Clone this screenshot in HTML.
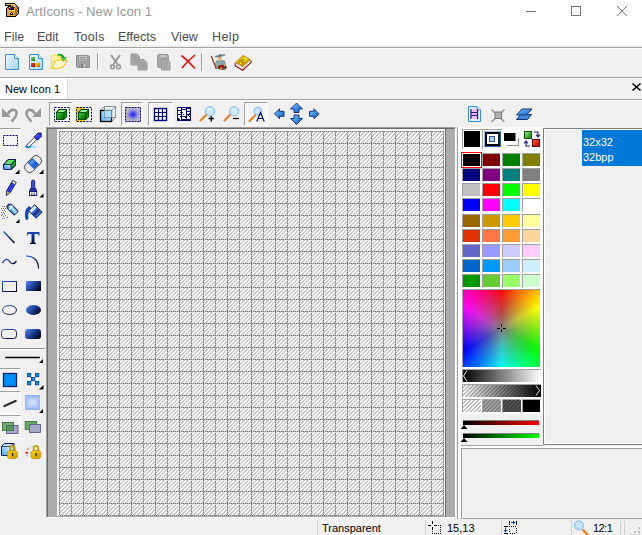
<!DOCTYPE html>
<html><head><meta charset="utf-8">
<style>
*{margin:0;padding:0;box-sizing:border-box}
html,body{width:642px;height:535px;overflow:hidden;background:#f0f0f0;font-family:"Liberation Sans",sans-serif;position:relative}
.a{position:absolute}
.t{position:absolute;white-space:nowrap;line-height:1}
svg{position:absolute;overflow:visible}
.hl{position:absolute;left:0;width:642px;height:1px}
.press{position:absolute;border-top:1px solid #a0a0a0;border-left:1px solid #a0a0a0;border-right:1px solid #fff;border-bottom:1px solid #fff;
 background-color:#fafafa;background-image:linear-gradient(45deg,#f0f0f0 25%,transparent 25%,transparent 75%,#f0f0f0 75%),linear-gradient(45deg,#f0f0f0 25%,transparent 25%,transparent 75%,#f0f0f0 75%);background-size:2px 2px;background-position:0 0,1px 1px}
.sw{position:absolute;width:19px;height:14px;border-top:1px solid #a0a0a0;border-left:1px solid #a0a0a0;border-right:1px solid #fff;border-bottom:1px solid #fff}
</style></head><body>
<!-- title + menu white -->
<div class="a" style="left:0;top:0;width:642px;height:45px;background:#fff"></div>
<div class="hl" style="top:47px;background:#a0a0a0"></div>
<div class="hl" style="top:48px;background:#fff"></div>
<div class="hl" style="top:77px;background:#a0a0a0"></div>
<div class="hl" style="top:78px;background:#fff"></div>
<div class="hl" style="top:99px;background:#a0a0a0"></div>
<div class="hl" style="top:100px;background:#fff"></div>

<!-- title -->
<div class="t" style="left:26px;top:5px;font-size:13.2px;color:#999">ArtIcons - New Icon 1</div>
<!-- window controls -->
<div class="a" style="left:526px;top:11px;width:10px;height:1px;background:#777"></div>
<div class="a" style="left:571px;top:6px;width:10px;height:10px;border:1px solid #777"></div>
<svg style="left:617px;top:6px" width="10" height="10"><path d="M0 0L10 10M10 0L0 10" stroke="#777" stroke-width="1"/></svg>

<!-- menu -->
<div class="t" style="left:4px;top:30.5px;font-size:12.5px;color:#4a4a4a">File</div>
<div class="t" style="left:37px;top:30.5px;font-size:12.5px;color:#4a4a4a">Edit</div>
<div class="t" style="left:74px;top:30.5px;font-size:12.5px;color:#4a4a4a;letter-spacing:0.3px">Tools</div>
<div class="t" style="left:118px;top:30.5px;font-size:12.5px;color:#4a4a4a">Effects</div>
<div class="t" style="left:171px;top:30.5px;font-size:12.5px;color:#4a4a4a">View</div>
<div class="t" style="left:212px;top:30.5px;font-size:12.5px;color:#4a4a4a;letter-spacing:0.4px">Help</div>

<!-- tab -->
<div class="a" style="left:0;top:79px;width:68px;height:20px;background:#fff;border-right:1px solid #d9d9d9"></div>
<div class="t" style="left:5px;top:84px;font-size:11px;color:#000">New Icon 1</div>
<svg style="left:632px;top:83px" width="9" height="8"><path d="M0.5 0.5L8.5 7.5M8.5 0.5L0.5 7.5" stroke="#000" stroke-width="1.6"/></svg>


<!-- pressed buttons toolbar2 -->
<div class="press" style="left:49px;top:102px;width:24px;height:24px"></div>
<div class="press" style="left:121px;top:102px;width:22px;height:24px"></div>
<div class="press" style="left:148px;top:102px;width:25px;height:24px"></div>
<div class="press" style="left:244px;top:102px;width:24px;height:24px"></div>
<!-- pressed buttons left palette -->
<div class="press" style="left:-1px;top:128px;width:22px;height:24px"></div>
<div class="press" style="left:-1px;top:368px;width:22px;height:23px"></div>
<div class="press" style="left:-1px;top:391px;width:22px;height:24px"></div>
<div class="press" style="left:-1px;top:415px;width:22px;height:24px"></div>

<!-- CANVAS FRAME -->
<div class="a" style="left:46px;top:127px;width:410px;height:391px;border-top:1px solid #a0a0a0;border-left:1px solid #a0a0a0;border-right:1px solid #fff;border-bottom:1px solid #fff"></div>
<div class="a" style="left:47px;top:128px;width:408px;height:389px;border-top:1px solid #696969;border-left:1px solid #696969;border-right:1px solid #ababab;border-bottom:1px solid #ababab;background:#ababab"></div>
<div class="a" style="left:57px;top:129px;width:388px;height:387px;background:#fff"></div>
<div class="a" style="left:445px;top:129px;width:1px;height:388px;background:#6a6a6a"></div>
<svg style="left:59px;top:131px" width="385" height="385" shape-rendering="crispEdges">
<defs>
<pattern id="hatch" width="4" height="4" patternUnits="userSpaceOnUse"><g fill="#c8c8c8"><rect x="0" y="1" width="1" height="1"/><rect x="0" y="2" width="1" height="1"/><rect x="1" y="0" width="1" height="1"/><rect x="1" y="1" width="1" height="1"/><rect x="2" y="0" width="1" height="1"/><rect x="2" y="3" width="1" height="1"/><rect x="3" y="2" width="1" height="1"/><rect x="3" y="3" width="1" height="1"/></g></pattern>
<pattern id="hatch2" width="4" height="4" patternUnits="userSpaceOnUse"><g fill="#c0c0c0"><rect x="0" y="1" width="1" height="1"/><rect x="0" y="2" width="1" height="1"/><rect x="1" y="0" width="1" height="1"/><rect x="1" y="1" width="1" height="1"/><rect x="2" y="0" width="1" height="1"/><rect x="2" y="3" width="1" height="1"/><rect x="3" y="2" width="1" height="1"/><rect x="3" y="3" width="1" height="1"/></g></pattern>
<pattern id="hA" width="2" height="2" patternUnits="userSpaceOnUse"><rect x="0" y="0" width="1" height="2" fill="#727272"/></pattern>
<pattern id="hB" width="2" height="2" patternUnits="userSpaceOnUse"><rect x="1" y="0" width="1" height="2" fill="#727272"/></pattern>
<pattern id="vA" width="2" height="2" patternUnits="userSpaceOnUse"><rect x="0" y="0" width="2" height="1" fill="#727272"/></pattern>
<pattern id="vB" width="2" height="2" patternUnits="userSpaceOnUse"><rect x="0" y="1" width="2" height="1" fill="#727272"/></pattern>
</defs>
<rect width="385" height="385" fill="url(#hatch)"/>
<g fill="#c4c4c4"><rect x="0" y="0" width="385" height="1"/><rect x="0" y="12" width="385" height="1"/><rect x="0" y="24" width="385" height="1"/><rect x="0" y="36" width="385" height="1"/><rect x="0" y="48" width="385" height="1"/><rect x="0" y="60" width="385" height="1"/><rect x="0" y="72" width="385" height="1"/><rect x="0" y="84" width="385" height="1"/><rect x="0" y="96" width="385" height="1"/><rect x="0" y="108" width="385" height="1"/><rect x="0" y="120" width="385" height="1"/><rect x="0" y="132" width="385" height="1"/><rect x="0" y="144" width="385" height="1"/><rect x="0" y="156" width="385" height="1"/><rect x="0" y="168" width="385" height="1"/><rect x="0" y="180" width="385" height="1"/><rect x="0" y="192" width="385" height="1"/><rect x="0" y="204" width="385" height="1"/><rect x="0" y="216" width="385" height="1"/><rect x="0" y="228" width="385" height="1"/><rect x="0" y="240" width="385" height="1"/><rect x="0" y="252" width="385" height="1"/><rect x="0" y="264" width="385" height="1"/><rect x="0" y="276" width="385" height="1"/><rect x="0" y="288" width="385" height="1"/><rect x="0" y="300" width="385" height="1"/><rect x="0" y="312" width="385" height="1"/><rect x="0" y="324" width="385" height="1"/><rect x="0" y="336" width="385" height="1"/><rect x="0" y="348" width="385" height="1"/><rect x="0" y="360" width="385" height="1"/><rect x="0" y="372" width="385" height="1"/><rect x="0" y="384" width="385" height="1"/><rect x="0" y="0" width="1" height="385"/><rect x="12" y="0" width="1" height="385"/><rect x="24" y="0" width="1" height="385"/><rect x="36" y="0" width="1" height="385"/><rect x="48" y="0" width="1" height="385"/><rect x="60" y="0" width="1" height="385"/><rect x="72" y="0" width="1" height="385"/><rect x="84" y="0" width="1" height="385"/><rect x="96" y="0" width="1" height="385"/><rect x="108" y="0" width="1" height="385"/><rect x="120" y="0" width="1" height="385"/><rect x="132" y="0" width="1" height="385"/><rect x="144" y="0" width="1" height="385"/><rect x="156" y="0" width="1" height="385"/><rect x="168" y="0" width="1" height="385"/><rect x="180" y="0" width="1" height="385"/><rect x="192" y="0" width="1" height="385"/><rect x="204" y="0" width="1" height="385"/><rect x="216" y="0" width="1" height="385"/><rect x="228" y="0" width="1" height="385"/><rect x="240" y="0" width="1" height="385"/><rect x="252" y="0" width="1" height="385"/><rect x="264" y="0" width="1" height="385"/><rect x="276" y="0" width="1" height="385"/><rect x="288" y="0" width="1" height="385"/><rect x="300" y="0" width="1" height="385"/><rect x="312" y="0" width="1" height="385"/><rect x="324" y="0" width="1" height="385"/><rect x="336" y="0" width="1" height="385"/><rect x="348" y="0" width="1" height="385"/><rect x="360" y="0" width="1" height="385"/><rect x="372" y="0" width="1" height="385"/><rect x="384" y="0" width="1" height="385"/></g>
<rect x="0" y="0" width="385" height="1" fill="url(#hB)"/><rect x="0" y="12" width="385" height="1" fill="url(#hA)"/><rect x="0" y="24" width="385" height="1" fill="url(#hB)"/><rect x="0" y="36" width="385" height="1" fill="url(#hA)"/><rect x="0" y="48" width="385" height="1" fill="url(#hB)"/><rect x="0" y="60" width="385" height="1" fill="url(#hA)"/><rect x="0" y="72" width="385" height="1" fill="url(#hB)"/><rect x="0" y="84" width="385" height="1" fill="url(#hA)"/><rect x="0" y="96" width="385" height="1" fill="url(#hB)"/><rect x="0" y="108" width="385" height="1" fill="url(#hA)"/><rect x="0" y="120" width="385" height="1" fill="url(#hB)"/><rect x="0" y="132" width="385" height="1" fill="url(#hA)"/><rect x="0" y="144" width="385" height="1" fill="url(#hB)"/><rect x="0" y="156" width="385" height="1" fill="url(#hA)"/><rect x="0" y="168" width="385" height="1" fill="url(#hB)"/><rect x="0" y="180" width="385" height="1" fill="url(#hA)"/><rect x="0" y="192" width="385" height="1" fill="url(#hB)"/><rect x="0" y="204" width="385" height="1" fill="url(#hA)"/><rect x="0" y="216" width="385" height="1" fill="url(#hB)"/><rect x="0" y="228" width="385" height="1" fill="url(#hA)"/><rect x="0" y="240" width="385" height="1" fill="url(#hB)"/><rect x="0" y="252" width="385" height="1" fill="url(#hA)"/><rect x="0" y="264" width="385" height="1" fill="url(#hB)"/><rect x="0" y="276" width="385" height="1" fill="url(#hA)"/><rect x="0" y="288" width="385" height="1" fill="url(#hB)"/><rect x="0" y="300" width="385" height="1" fill="url(#hA)"/><rect x="0" y="312" width="385" height="1" fill="url(#hB)"/><rect x="0" y="324" width="385" height="1" fill="url(#hA)"/><rect x="0" y="336" width="385" height="1" fill="url(#hB)"/><rect x="0" y="348" width="385" height="1" fill="url(#hA)"/><rect x="0" y="360" width="385" height="1" fill="url(#hB)"/><rect x="0" y="372" width="385" height="1" fill="url(#hA)"/><rect x="0" y="384" width="385" height="1" fill="url(#hB)"/>
<rect x="0" y="0" width="1" height="385" fill="url(#vB)"/><rect x="12" y="0" width="1" height="385" fill="url(#vA)"/><rect x="24" y="0" width="1" height="385" fill="url(#vB)"/><rect x="36" y="0" width="1" height="385" fill="url(#vA)"/><rect x="48" y="0" width="1" height="385" fill="url(#vB)"/><rect x="60" y="0" width="1" height="385" fill="url(#vA)"/><rect x="72" y="0" width="1" height="385" fill="url(#vB)"/><rect x="84" y="0" width="1" height="385" fill="url(#vA)"/><rect x="96" y="0" width="1" height="385" fill="url(#vB)"/><rect x="108" y="0" width="1" height="385" fill="url(#vA)"/><rect x="120" y="0" width="1" height="385" fill="url(#vB)"/><rect x="132" y="0" width="1" height="385" fill="url(#vA)"/><rect x="144" y="0" width="1" height="385" fill="url(#vB)"/><rect x="156" y="0" width="1" height="385" fill="url(#vA)"/><rect x="168" y="0" width="1" height="385" fill="url(#vB)"/><rect x="180" y="0" width="1" height="385" fill="url(#vA)"/><rect x="192" y="0" width="1" height="385" fill="url(#vB)"/><rect x="204" y="0" width="1" height="385" fill="url(#vA)"/><rect x="216" y="0" width="1" height="385" fill="url(#vB)"/><rect x="228" y="0" width="1" height="385" fill="url(#vA)"/><rect x="240" y="0" width="1" height="385" fill="url(#vB)"/><rect x="252" y="0" width="1" height="385" fill="url(#vA)"/><rect x="264" y="0" width="1" height="385" fill="url(#vB)"/><rect x="276" y="0" width="1" height="385" fill="url(#vA)"/><rect x="288" y="0" width="1" height="385" fill="url(#vB)"/><rect x="300" y="0" width="1" height="385" fill="url(#vA)"/><rect x="312" y="0" width="1" height="385" fill="url(#vB)"/><rect x="324" y="0" width="1" height="385" fill="url(#vA)"/><rect x="336" y="0" width="1" height="385" fill="url(#vB)"/><rect x="348" y="0" width="1" height="385" fill="url(#vA)"/><rect x="360" y="0" width="1" height="385" fill="url(#vB)"/><rect x="372" y="0" width="1" height="385" fill="url(#vA)"/><rect x="384" y="0" width="1" height="385" fill="url(#vB)"/>
</svg>

<!-- right palette panel -->
<div class="a" style="left:457px;top:127px;width:1px;height:392px;background:#a0a0a0"></div>
<div class="a" style="left:458px;top:127px;width:85px;height:287px;background:#fff"></div>
<div class="a" style="left:458px;top:414px;width:3px;height:104px;background:#fff"></div>
<div class="a" style="left:461px;top:445px;width:82px;height:1px;background:#a0a0a0"></div>
<!-- palette -->
<div class="sw" style="left:462px;top:153px;background:#000000"></div>
<div class="sw" style="left:482px;top:153px;background:#800000"></div>
<div class="sw" style="left:502px;top:153px;background:#008000"></div>
<div class="sw" style="left:522px;top:153px;background:#808000"></div>
<div class="sw" style="left:462px;top:168px;background:#000080"></div>
<div class="sw" style="left:482px;top:168px;background:#800080"></div>
<div class="sw" style="left:502px;top:168px;background:#008080"></div>
<div class="sw" style="left:522px;top:168px;background:#808080"></div>
<div class="sw" style="left:462px;top:183px;background:#c0c0c0"></div>
<div class="sw" style="left:482px;top:183px;background:#ff0000"></div>
<div class="sw" style="left:502px;top:183px;background:#00ff00"></div>
<div class="sw" style="left:522px;top:183px;background:#ffff00"></div>
<div class="sw" style="left:462px;top:198px;background:#0000ff"></div>
<div class="sw" style="left:482px;top:198px;background:#ff00ff"></div>
<div class="sw" style="left:502px;top:198px;background:#00ffff"></div>
<div class="sw" style="left:522px;top:198px;background:#ffffff"></div>
<div class="sw" style="left:462px;top:214px;background:#996600"></div>
<div class="sw" style="left:482px;top:214px;background:#cc9900"></div>
<div class="sw" style="left:502px;top:214px;background:#ffcc00"></div>
<div class="sw" style="left:522px;top:214px;background:#ffff99"></div>
<div class="sw" style="left:462px;top:229px;background:#dd3300"></div>
<div class="sw" style="left:482px;top:229px;background:#ff7744"></div>
<div class="sw" style="left:502px;top:229px;background:#ff9933"></div>
<div class="sw" style="left:522px;top:229px;background:#ffd699"></div>
<div class="sw" style="left:462px;top:244px;background:#6666cc"></div>
<div class="sw" style="left:482px;top:244px;background:#9999ff"></div>
<div class="sw" style="left:502px;top:244px;background:#ccccff"></div>
<div class="sw" style="left:522px;top:244px;background:#ffccff"></div>
<div class="sw" style="left:462px;top:259px;background:#0066cc"></div>
<div class="sw" style="left:482px;top:259px;background:#0099ff"></div>
<div class="sw" style="left:502px;top:259px;background:#99ccff"></div>
<div class="sw" style="left:522px;top:259px;background:#cceeff"></div>
<div class="sw" style="left:462px;top:274px;background:#009900"></div>
<div class="sw" style="left:482px;top:274px;background:#66cc33"></div>
<div class="sw" style="left:502px;top:274px;background:#99ff66"></div>
<div class="sw" style="left:522px;top:274px;background:#ccffcc"></div>

<div class="a" style="left:461px;top:152px;width:21px;height:16px;border:1px solid #f00"></div>
<div class="a" style="left:462px;top:153px;width:19px;height:14px;border:1px solid #fff;background:#000"></div>
<!-- header -->
<div class="a" style="left:462px;top:129px;width:40px;height:1px;background:#a0a0a0"></div>
<div class="a" style="left:462px;top:129px;width:1px;height:20px;background:#a0a0a0"></div>
<div class="a" style="left:482px;top:129px;width:1px;height:20px;background:#a0a0a0"></div>
<div class="a" style="left:464px;top:131px;width:16px;height:16px;background:#000"></div>
<div class="a" style="left:484px;top:131px;width:17px;height:16px;border:1px solid #2860c0;border-top-color:#90c0f0;border-left-color:#90c0f0"></div>
<div class="a" style="left:485px;top:132px;width:15px;height:14px;border:2px solid #000;border-right-color:#202020;background:#fff"></div>
<div class="a" style="left:489px;top:136px;width:6px;height:6px;background:#a8d0ff;border:1px solid #3050a0"></div>
<div class="a" style="left:507px;top:138px;width:12px;height:8px;background:#fff;border-right:1px solid #909090;border-bottom:1px solid #909090"></div>
<div class="a" style="left:504px;top:133px;width:12px;height:8px;background:#000;border-right:1px solid #808080"></div>
<div class="a" style="left:524px;top:131px;width:8px;height:8px;background:linear-gradient(135deg,#90f070,#108010);border:1px solid #105010"></div>
<div class="a" style="left:532px;top:139px;width:8px;height:8px;background:linear-gradient(135deg,#ff6020,#c00000);border:1px solid #600000"></div>
<!-- color wheel -->
<div class="a" style="left:462px;top:289px;width:79px;height:79px;border-top:1px solid #a0a0a0;border-left:1px solid #a0a0a0;border-right:1px solid #fff;border-bottom:1px solid #fff"></div>
<div class="a" style="left:463px;top:290px;width:77px;height:77px;background:conic-gradient(from 0deg,#f00,#ff0 60deg,#0f0 120deg,#0ff 180deg,#00f 240deg,#f0f 300deg,#f00 360deg)"></div>
<div class="a" style="left:463px;top:290px;width:77px;height:77px;background:radial-gradient(circle at 50% 50%,rgba(128,128,128,1) 0,rgba(128,128,128,.5) 17px,rgba(128,128,128,0) 42px)"></div>
<!-- gray gradient -->
<div class="a" style="left:462px;top:369px;width:79px;height:14px;border-top:1px solid #a0a0a0;border-left:1px solid #a0a0a0;border-bottom:1px solid #fff;background:linear-gradient(90deg,#000,#fff)"></div>
<!-- transparency bar -->
<div class="a" style="left:462px;top:384px;width:79px;height:14px;border-top:1px solid #a0a0a0;border-left:1px solid #a0a0a0;border-bottom:1px solid #fff"></div>
<div class="a" style="left:462px;top:399px;width:19px;height:14px;border-top:1px solid #a0a0a0;border-left:1px solid #a0a0a0;border-right:1px solid #fff;border-bottom:1px solid #fff"></div>
<div class="a" style="left:482px;top:399px;width:19px;height:14px;border-top:1px solid #a0a0a0;border-left:1px solid #a0a0a0;border-right:1px solid #fff;border-bottom:1px solid #fff"></div>
<div class="a" style="left:502px;top:399px;width:19px;height:14px;border-top:1px solid #a0a0a0;border-left:1px solid #a0a0a0;border-right:1px solid #fff;border-bottom:1px solid #fff"></div>
<div class="a" style="left:522px;top:399px;width:19px;height:14px;border-top:1px solid #a0a0a0;border-left:1px solid #a0a0a0;border-right:1px solid #fff;border-bottom:1px solid #fff;background:#000"></div>
<svg style="left:463px;top:385px" width="78" height="27" shape-rendering="crispEdges">
<defs><linearGradient id="tg" x1="0" x2="1"><stop offset="0" stop-color="#000" stop-opacity="0"/><stop offset="1" stop-color="#000" stop-opacity="1"/></linearGradient></defs>
<rect x="0" y="0" width="78" height="12" fill="#fff"/>
<rect x="0" y="0" width="78" height="12" fill="url(#hatch2)"/>
<rect x="0" y="0" width="78" height="12" fill="url(#tg)"/>
<rect x="0" y="15" width="18" height="12" fill="#fff"/><rect x="0" y="15" width="18" height="12" fill="url(#hatch2)"/>
<rect x="20" y="15" width="18" height="12" fill="#fff"/><rect x="20" y="15" width="18" height="12" fill="url(#hatch2)"/><rect x="20" y="15" width="18" height="12" fill="#000" fill-opacity="0.35"/>
<rect x="40" y="15" width="18" height="12" fill="#fff"/><rect x="40" y="15" width="18" height="12" fill="url(#hatch2)"/><rect x="40" y="15" width="18" height="12" fill="#000" fill-opacity="0.68"/>
</svg>
<!-- sliders -->
<div class="a" style="left:463px;top:420px;width:76px;height:5px;border-top:1px solid #808080;background:linear-gradient(90deg,#000,#f00)"></div>
<div class="a" style="left:463px;top:433px;width:76px;height:5px;border-top:1px solid #808080;background:linear-gradient(90deg,#000,#0f0)"></div>
<!-- list panel -->
<div class="a" style="left:543px;top:128px;width:99px;height:317px;border-left:1px solid #7c8088;border-top:1px solid #7c8088;border-bottom:1px solid #7c8088"></div>
<div class="a" style="left:544px;top:129px;width:98px;height:315px;border-left:1px solid #fff;border-top:1px solid #fff;border-bottom:1px solid #fff"></div>
<div class="a" style="left:582px;top:130px;width:60px;height:36px;background:#0078d7"></div>
<div class="t" style="left:583px;top:135px;font-size:11px;color:#fff;line-height:15px">32x32<br>32bpp</div>
<!-- bottom panel -->
<div class="a" style="left:461px;top:446px;width:181px;height:2px;background:#fff"></div>
<div class="a" style="left:461px;top:448px;width:181px;height:71px;border-left:1px solid #a0a0a0;border-top:1px solid #a0a0a0;border-bottom:1px solid #a0a0a0"></div>

<!-- status bar -->
<div class="a" style="left:317px;top:520px;width:1px;height:15px;background:#d0d0d0"></div>
<div class="a" style="left:425px;top:520px;width:1px;height:15px;background:#d0d0d0"></div>
<div class="a" style="left:501px;top:520px;width:1px;height:15px;background:#d0d0d0"></div>
<div class="a" style="left:571px;top:520px;width:1px;height:15px;background:#d0d0d0"></div>
<div class="a" style="left:620px;top:521px;width:1px;height:14px;background:#d0d0d0"></div><div class="a" style="left:624px;top:521px;width:1px;height:14px;background:#d0d0d0"></div>
<div class="t" style="left:322px;top:523px;font-size:11px;color:#000">Transparent</div>
<div class="t" style="left:447px;top:523px;font-size:11px;color:#000">15,13</div>
<div class="t" style="left:593px;top:523px;font-size:11px;color:#000;letter-spacing:-0.5px">12:1</div>


<svg style="left:0;top:0" width="642" height="535">
<defs>
<linearGradient id="docg" x1="0" y1="0" x2="1" y2="1"><stop offset="0" stop-color="#eaf8ff"/><stop offset="1" stop-color="#a9d4f5"/></linearGradient>
<linearGradient id="grn" x1="0" y1="0" x2="1" y2="1"><stop offset="0" stop-color="#8fe070"/><stop offset="1" stop-color="#087008"/></linearGradient>
<linearGradient id="red" x1="0" y1="0" x2="1" y2="1"><stop offset="0" stop-color="#ff5030"/><stop offset="1" stop-color="#b00000"/></linearGradient>
<linearGradient id="org" x1="0" y1="0" x2="1" y2="1"><stop offset="0" stop-color="#ffd000"/><stop offset="1" stop-color="#b07000"/></linearGradient>
<linearGradient id="fold" x1="0" y1="0" x2="1" y2="1"><stop offset="0" stop-color="#fffde0"/><stop offset="1" stop-color="#f8e870"/></linearGradient>
<linearGradient id="blu" x1="0" y1="0" x2="1" y2="1"><stop offset="0" stop-color="#80c8ff"/><stop offset="1" stop-color="#0060d0"/></linearGradient>
<linearGradient id="blk" x1="0" y1="0.2" x2="1" y2="0.8"><stop offset="0" stop-color="#5080e8"/><stop offset="0.5" stop-color="#1a3a90"/><stop offset="1" stop-color="#000010"/></linearGradient>
<linearGradient id="cube" x1="0" y1="0" x2="1" y2="1"><stop offset="0" stop-color="#30d030"/><stop offset="1" stop-color="#006000"/></linearGradient>
<radialGradient id="rw"><stop offset="0" stop-color="#e0f0ff"/><stop offset="1" stop-color="#e0f0ff" stop-opacity="0"/></radialGradient>
<linearGradient id="ltb" x1="0" y1="1" x2="1" y2="0"><stop offset="0" stop-color="#3088f8"/><stop offset="1" stop-color="#d8f8ff"/></linearGradient>
<linearGradient id="ltb2" x1="0" y1="0" x2="1" y2="0"><stop offset="0" stop-color="#1060d0"/><stop offset="0.6" stop-color="#c8f0ff"/><stop offset="1" stop-color="#3080e0"/></linearGradient>
<linearGradient id="tgrad" x1="0" y1="0" x2="0" y2="1"><stop offset="0" stop-color="#1848c0"/><stop offset="1" stop-color="#000830"/></linearGradient>
<linearGradient id="lgrad" gradientUnits="userSpaceOnUse" x1="3" y1="231" x2="15" y2="243"><stop offset="0" stop-color="#3070f0"/><stop offset="1" stop-color="#000"/></linearGradient>
<linearGradient id="glass" x1="0" y1="1" x2="1" y2="0"><stop offset="0" stop-color="#40a8f8"/><stop offset="1" stop-color="#d0f4ff"/></linearGradient>
<linearGradient id="pyT" x1="0" y1="0" x2="0" y2="1"><stop offset="0" stop-color="#8aaaff"/><stop offset="1" stop-color="#e8f0ff"/></linearGradient>
<linearGradient id="pyB" x1="0" y1="1" x2="0" y2="0"><stop offset="0" stop-color="#8aaaff"/><stop offset="1" stop-color="#e8f0ff"/></linearGradient>
<linearGradient id="pyL" x1="0" y1="0" x2="1" y2="0"><stop offset="0" stop-color="#94b4ff"/><stop offset="1" stop-color="#e8f0ff"/></linearGradient>
<linearGradient id="pyR" x1="1" y1="0" x2="0" y2="0"><stop offset="0" stop-color="#94b4ff"/><stop offset="1" stop-color="#e8f0ff"/></linearGradient>
<linearGradient id="gold" x1="0" y1="0" x2="1" y2="1"><stop offset="0" stop-color="#f8d400"/><stop offset="1" stop-color="#d09800"/></linearGradient>
<linearGradient id="sgrad" x1="0" y1="0" x2="1" y2="1"><stop offset="0" stop-color="#2a5ae0"/><stop offset="1" stop-color="#000020"/></linearGradient>
<radialGradient id="rb"><stop offset="0" stop-color="#1818ff"/><stop offset="0.7" stop-color="#a0a0d0"/><stop offset="1" stop-color="#b8b8c0"/></radialGradient>
</defs>

<!-- title icon -->
<g shape-rendering="crispEdges"><rect x="5" y="3" width="1" height="1" fill="#000"/><rect x="6" y="3" width="1" height="1" fill="#000"/><rect x="7" y="3" width="1" height="1" fill="#000"/><rect x="8" y="3" width="1" height="1" fill="#000"/><rect x="9" y="3" width="1" height="1" fill="#000"/><rect x="10" y="3" width="1" height="1" fill="#000"/><rect x="11" y="3" width="1" height="1" fill="#000"/><rect x="12" y="3" width="1" height="1" fill="#000"/><rect x="13" y="3" width="1" height="1" fill="#000"/><rect x="14" y="3" width="1" height="1" fill="#000"/><rect x="5" y="4" width="1" height="1" fill="#000"/><rect x="6" y="4" width="1" height="1" fill="#f0c060"/><rect x="7" y="4" width="1" height="1" fill="#f0c060"/><rect x="8" y="4" width="1" height="1" fill="#f0c060"/><rect x="9" y="4" width="1" height="1" fill="#f0c060"/><rect x="10" y="4" width="1" height="1" fill="#f0c060"/><rect x="11" y="4" width="1" height="1" fill="#f0c060"/><rect x="12" y="4" width="1" height="1" fill="#f0c060"/><rect x="13" y="4" width="1" height="1" fill="#f0c060"/><rect x="14" y="4" width="1" height="1" fill="#f0c060"/><rect x="15" y="4" width="1" height="1" fill="#000"/><rect x="5" y="5" width="1" height="1" fill="#000"/><rect x="6" y="5" width="1" height="1" fill="#000"/><rect x="7" y="5" width="1" height="1" fill="#000"/><rect x="8" y="5" width="1" height="1" fill="#000"/><rect x="9" y="5" width="1" height="1" fill="#000"/><rect x="10" y="5" width="1" height="1" fill="#000"/><rect x="11" y="5" width="1" height="1" fill="#e0a038"/><rect x="12" y="5" width="1" height="1" fill="#e0a038"/><rect x="13" y="5" width="1" height="1" fill="#e0a038"/><rect x="14" y="5" width="1" height="1" fill="#e0a038"/><rect x="15" y="5" width="1" height="1" fill="#e0a038"/><rect x="16" y="5" width="1" height="1" fill="#000"/><rect x="8" y="6" width="1" height="1" fill="#000"/><rect x="9" y="6" width="1" height="1" fill="#4a3010"/><rect x="10" y="6" width="1" height="1" fill="#4a3010"/><rect x="11" y="6" width="1" height="1" fill="#f00"/><rect x="12" y="6" width="1" height="1" fill="#4a3010"/><rect x="13" y="6" width="1" height="1" fill="#0c0"/><rect x="14" y="6" width="1" height="1" fill="#fff"/><rect x="15" y="6" width="1" height="1" fill="#e0a038"/><rect x="16" y="6" width="1" height="1" fill="#b07418"/><rect x="17" y="6" width="1" height="1" fill="#000"/><rect x="7" y="7" width="1" height="1" fill="#000"/><rect x="8" y="7" width="1" height="1" fill="#4a3010"/><rect x="9" y="7" width="1" height="1" fill="#ff0"/><rect x="10" y="7" width="1" height="1" fill="#4a3010"/><rect x="11" y="7" width="1" height="1" fill="#4a3010"/><rect x="12" y="7" width="1" height="1" fill="#4a3010"/><rect x="13" y="7" width="1" height="1" fill="#4a3010"/><rect x="14" y="7" width="1" height="1" fill="#4a3010"/><rect x="15" y="7" width="1" height="1" fill="#e0a038"/><rect x="16" y="7" width="1" height="1" fill="#b07418"/><rect x="17" y="7" width="1" height="1" fill="#b07418"/><rect x="18" y="7" width="1" height="1" fill="#000"/><rect x="6" y="8" width="1" height="1" fill="#000"/><rect x="7" y="8" width="1" height="1" fill="#e0a038"/><rect x="8" y="8" width="1" height="1" fill="#f00"/><rect x="9" y="8" width="1" height="1" fill="#4a3010"/><rect x="10" y="8" width="1" height="1" fill="#00f"/><rect x="11" y="8" width="1" height="1" fill="#4a3010"/><rect x="12" y="8" width="1" height="1" fill="#4a3010"/><rect x="13" y="8" width="1" height="1" fill="#000"/><rect x="14" y="8" width="1" height="1" fill="#e0a038"/><rect x="15" y="8" width="1" height="1" fill="#b07418"/><rect x="16" y="8" width="1" height="1" fill="#b07418"/><rect x="17" y="8" width="1" height="1" fill="#b07418"/><rect x="18" y="8" width="1" height="1" fill="#000"/><rect x="6" y="9" width="1" height="1" fill="#000"/><rect x="7" y="9" width="1" height="1" fill="#e0a038"/><rect x="8" y="9" width="1" height="1" fill="#e0a038"/><rect x="9" y="9" width="1" height="1" fill="#00f"/><rect x="10" y="9" width="1" height="1" fill="#000"/><rect x="11" y="9" width="1" height="1" fill="#000"/><rect x="12" y="9" width="1" height="1" fill="#000"/><rect x="13" y="9" width="1" height="1" fill="#000"/><rect x="14" y="9" width="1" height="1" fill="#e0a038"/><rect x="15" y="9" width="1" height="1" fill="#b07418"/><rect x="16" y="9" width="1" height="1" fill="#b07418"/><rect x="17" y="9" width="1" height="1" fill="#b07418"/><rect x="18" y="9" width="1" height="1" fill="#000"/><rect x="6" y="10" width="1" height="1" fill="#000"/><rect x="7" y="10" width="1" height="1" fill="#f0c060"/><rect x="8" y="10" width="1" height="1" fill="#f0c060"/><rect x="9" y="10" width="1" height="1" fill="#f0c060"/><rect x="10" y="10" width="1" height="1" fill="#f0c060"/><rect x="11" y="10" width="1" height="1" fill="#f0c060"/><rect x="12" y="10" width="1" height="1" fill="#f0c060"/><rect x="13" y="10" width="1" height="1" fill="#f0c060"/><rect x="14" y="10" width="1" height="1" fill="#f0c060"/><rect x="15" y="10" width="1" height="1" fill="#b07418"/><rect x="16" y="10" width="1" height="1" fill="#b07418"/><rect x="17" y="10" width="1" height="1" fill="#b07418"/><rect x="18" y="10" width="1" height="1" fill="#000"/><rect x="6" y="11" width="1" height="1" fill="#000"/><rect x="7" y="11" width="1" height="1" fill="#e0a038"/><rect x="8" y="11" width="1" height="1" fill="#e0a038"/><rect x="9" y="11" width="1" height="1" fill="#e0a038"/><rect x="10" y="11" width="1" height="1" fill="#e0a038"/><rect x="11" y="11" width="1" height="1" fill="#e0a038"/><rect x="12" y="11" width="1" height="1" fill="#e0a038"/><rect x="13" y="11" width="1" height="1" fill="#e0a038"/><rect x="14" y="11" width="1" height="1" fill="#e0a038"/><rect x="15" y="11" width="1" height="1" fill="#b07418"/><rect x="16" y="11" width="1" height="1" fill="#b07418"/><rect x="17" y="11" width="1" height="1" fill="#b07418"/><rect x="18" y="11" width="1" height="1" fill="#000"/><rect x="6" y="12" width="1" height="1" fill="#000"/><rect x="7" y="12" width="1" height="1" fill="#e0a038"/><rect x="8" y="12" width="1" height="1" fill="#e0a038"/><rect x="9" y="12" width="1" height="1" fill="#e0a038"/><rect x="10" y="12" width="1" height="1" fill="#e0a038"/><rect x="11" y="12" width="1" height="1" fill="#000"/><rect x="12" y="12" width="1" height="1" fill="#e0a038"/><rect x="13" y="12" width="1" height="1" fill="#e0a038"/><rect x="14" y="12" width="1" height="1" fill="#e0a038"/><rect x="15" y="12" width="1" height="1" fill="#b07418"/><rect x="16" y="12" width="1" height="1" fill="#b07418"/><rect x="17" y="12" width="1" height="1" fill="#b07418"/><rect x="18" y="12" width="1" height="1" fill="#000"/><rect x="6" y="13" width="1" height="1" fill="#000"/><rect x="7" y="13" width="1" height="1" fill="#e0a038"/><rect x="8" y="13" width="1" height="1" fill="#e0a038"/><rect x="9" y="13" width="1" height="1" fill="#e0a038"/><rect x="10" y="13" width="1" height="1" fill="#000"/><rect x="11" y="13" width="1" height="1" fill="#ff0"/><rect x="12" y="13" width="1" height="1" fill="#000"/><rect x="13" y="13" width="1" height="1" fill="#e0a038"/><rect x="14" y="13" width="1" height="1" fill="#e0a038"/><rect x="15" y="13" width="1" height="1" fill="#b07418"/><rect x="16" y="13" width="1" height="1" fill="#b07418"/><rect x="17" y="13" width="1" height="1" fill="#b07418"/><rect x="18" y="13" width="1" height="1" fill="#000"/><rect x="6" y="14" width="1" height="1" fill="#000"/><rect x="7" y="14" width="1" height="1" fill="#e0a038"/><rect x="8" y="14" width="1" height="1" fill="#e0a038"/><rect x="9" y="14" width="1" height="1" fill="#e0a038"/><rect x="10" y="14" width="1" height="1" fill="#000"/><rect x="11" y="14" width="1" height="1" fill="#000"/><rect x="12" y="14" width="1" height="1" fill="#000"/><rect x="13" y="14" width="1" height="1" fill="#e0a038"/><rect x="14" y="14" width="1" height="1" fill="#e0a038"/><rect x="15" y="14" width="1" height="1" fill="#b07418"/><rect x="16" y="14" width="1" height="1" fill="#b07418"/><rect x="17" y="14" width="1" height="1" fill="#000"/><rect x="6" y="15" width="1" height="1" fill="#000"/><rect x="7" y="15" width="1" height="1" fill="#e0a038"/><rect x="8" y="15" width="1" height="1" fill="#e0a038"/><rect x="9" y="15" width="1" height="1" fill="#e0a038"/><rect x="10" y="15" width="1" height="1" fill="#e0a038"/><rect x="11" y="15" width="1" height="1" fill="#e0a038"/><rect x="12" y="15" width="1" height="1" fill="#e0a038"/><rect x="13" y="15" width="1" height="1" fill="#e0a038"/><rect x="14" y="15" width="1" height="1" fill="#e0a038"/><rect x="15" y="15" width="1" height="1" fill="#b07418"/><rect x="16" y="15" width="1" height="1" fill="#000"/><rect x="6" y="16" width="1" height="1" fill="#000"/><rect x="7" y="16" width="1" height="1" fill="#000"/><rect x="8" y="16" width="1" height="1" fill="#000"/><rect x="9" y="16" width="1" height="1" fill="#000"/><rect x="10" y="16" width="1" height="1" fill="#000"/><rect x="11" y="16" width="1" height="1" fill="#000"/><rect x="12" y="16" width="1" height="1" fill="#000"/><rect x="13" y="16" width="1" height="1" fill="#000"/><rect x="14" y="16" width="1" height="1" fill="#000"/><rect x="15" y="16" width="1" height="1" fill="#000"/></g>
<!-- toolbar 1 -->
<path d="M5.5 54.5H14.5L18.5 58.5V69.5H5.5Z" fill="url(#docg)" stroke="#3a8edc"/>
<path d="M14.5 54.5V58.5H18.5" fill="#fff" stroke="#3a8edc"/>
<path d="M29.5 54.5H38.5L42.5 58.5V69.5H29.5Z" fill="url(#docg)" stroke="#3a8edc"/>
<path d="M38.5 54.5V58.5H42.5" fill="#fff" stroke="#3a8edc"/>
<rect x="31" y="57" width="4" height="4" fill="url(#grn)"/>
<rect x="31" y="63" width="4" height="4" fill="url(#red)"/>
<rect x="36" y="63" width="4" height="4" fill="url(#org)"/>
<!-- folder -->
<path d="M51.5 68.5V57.5L53 55.5H56L57 56.5H62.5V60" fill="#fff2a8" stroke="#ffc400" stroke-width="1.1"/>
<path d="M51.5 68.5V57.5L53 55.5H56L57 56.5H62.5V62H54L51.5 68.5Z" fill="#fff2a8"/>
<path d="M52 68.5L54.5 61.5L57 60H66.5L65.5 63.5L62.5 67L57 68.5Z" fill="#fffbd0" stroke="#ffc400" stroke-width="1.1"/>
<path d="M57.5 54.8C61 54.2 63 55.5 63.6 58" fill="none" stroke="#189818" stroke-width="1.8"/>
<path d="M60.8 57.3H66.3L63.5 61.3Z" fill="#50d040" stroke="#189818" stroke-width="0.6"/>
<!-- disk -->
<path d="M76.5 55.5H88.5L89.5 56.5V67.5H77.5L76.5 66.5Z" fill="#a8a8a8" stroke="#8a8a8a"/>
<rect x="78.5" y="55.5" width="9" height="5.5" fill="#c4c4c4" stroke="#909090" stroke-width="0.8"/>
<path d="M80 57.5H86M80 59.3H86" stroke="#8c8c8c" stroke-width="0.9"/>
<rect x="79.5" y="63" width="7" height="4.5" fill="#b8b8b8" stroke="#909090" stroke-width="0.8"/>
<rect x="80.8" y="64" width="2" height="3.2" fill="#777"/>
<rect x="97" y="53" width="1" height="17" fill="#a0a0a0"/><rect x="98" y="53" width="1" height="17" fill="#fff"/>
<!-- scissors -->
<path d="M111 55L117.5 64M120 55L113.5 64" stroke="#989898" stroke-width="2"/>
<circle cx="112.5" cy="66.8" r="1.9" fill="none" stroke="#989898" stroke-width="1.6"/>
<circle cx="118.5" cy="66.8" r="1.9" fill="none" stroke="#989898" stroke-width="1.6"/>
<!-- copy -->
<path d="M131 54H137L139.5 56.5V65H131Z" fill="#a8a8a8" stroke="#989898"/>
<path d="M138 59.5H144L147 62.5V70H138Z" fill="#a8a8a8" stroke="#989898"/>
<path d="M133 57H137M133 59H137M133 61H137M140 63H145M140 65H145M140 67H145" stroke="#939393" stroke-width="0.8"/>
<!-- paste -->
<rect x="157.5" y="54.5" width="11" height="13" rx="1.5" fill="#a8a8a8" stroke="#989898"/>
<rect x="160" y="55" width="6" height="2" fill="#c8c8c8"/>
<path d="M161.5 59.5H167.5L170 62V70H161.5Z" fill="#b0b0b0" stroke="#989898"/>
<path d="M163 62H168M163 64H168M163 66H168M163 68H168" stroke="#939393" stroke-width="0.8"/>
<!-- red x -->
<path d="M181.5 55.5C186 59 191 64 195 68.5M195 55C190 59 185 64 182 68" stroke="#e81010" stroke-width="1.6" fill="none"/>
<rect x="201" y="53" width="1" height="18" fill="#a0a0a0"/><rect x="202" y="53" width="1" height="18" fill="#fff"/>
<!-- painter -->
<path d="M215 69V63.5C215 61.5 217 60.5 220 60.5C223.5 60.5 226 61.5 226 64V69Z" fill="#8caaaa"/>
<path d="M216 61.5C217 60.8 218.5 60.5 220 60.5C222 60.5 224 61 225 61.8" stroke="#4a6a6a" stroke-width="0.9" fill="none"/>
<rect x="218" y="57" width="3.5" height="4" fill="#e8b080"/>
<path d="M214.5 57.2C215 55.5 220 53.5 225.5 54.5C226 55.5 221 57.5 214.5 57.2Z" fill="#5a7278"/>
<path d="M217 55.8H219M221.5 55H223.5" stroke="#c8d8d8" stroke-width="0.8"/>
<path d="M211.3 56L216.2 68.5" stroke="#8a4a20" stroke-width="1.4"/>
<ellipse cx="222.3" cy="67.2" rx="4.3" ry="2.5" fill="#701810"/>
<circle cx="220.8" cy="66.3" r="1" fill="#f01010"/><circle cx="221.2" cy="68.2" r="0.9" fill="#f0e000"/><circle cx="224" cy="68.3" r="0.9" fill="#20b060"/>
<circle cx="224.5" cy="65.5" r="1" fill="#f0b080"/>
<!-- book -->
<path d="M235.2 63.2L242.6 67.8L250.8 60.5V62.5L242.6 70L235.2 65.6Z" fill="#e4ecf4"/>
<path d="M235.2 63V65.8L242.6 70.2L251 62.6V60.6" fill="none" stroke="#900808" stroke-width="1.1"/>
<path d="M235 62.5L243 55L250.8 59.6L242.6 67.3Z" fill="#c49000"/>
<path d="M235 62.5L243 55L244.5 55.9L236.5 63.4Z" fill="#e0b020"/>
<path d="M242.5 59.2C243.5 57.6 247 57.8 246.8 59.4C246.6 60.8 244 60.6 243.6 61.6" fill="none" stroke="#ffff00" stroke-width="1.2"/>
<circle cx="240.6" cy="63.4" r="0.8" fill="#ffff00"/>
<!-- toolbar 2 -->
<path d="M2 108V117H11Z" fill="#999"/>
<path d="M8 114C10 109 16 108.5 16.5 112.5C17 116 14 119 11.5 121.5" fill="none" stroke="#999" stroke-width="2.6"/>
<path d="M41 108V117H32Z" fill="#999"/>
<path d="M35 114C33 109 27 108.5 26.5 112.5C26 116 29 119 31.5 121.5" fill="none" stroke="#999" stroke-width="2.6"/>

<!-- toolbar2 icons -->
<rect x="54.5" y="107.5" width="15" height="14" fill="none" stroke="#000080" stroke-dasharray="2 1.2"/>
<path d="M56 112L59 109H67V117L64 120H56Z" fill="#004000"/>
<rect x="56.8" y="112.8" width="6.5" height="6.5" fill="url(#cube)"/>
<path d="M57.5 112L59.5 110H66L64 112Z" fill="#90f090"/>
<path d="M64.2 112.2L66.2 110.2V116.8L64.2 119Z" fill="#009000"/>
<rect x="76" y="107" width="8.5" height="15" fill="#ffc800"/>
<rect x="76.5" y="107.5" width="15" height="14" fill="none" stroke="#000080" stroke-dasharray="2 1.2"/>
<path d="M78 112L81 109H89V117L86 120H78Z" fill="#004000"/>
<rect x="78.8" y="112.8" width="6.5" height="6.5" fill="url(#cube)"/>
<path d="M79.5 112L81.5 110H88L86 112Z" fill="#90f090"/>
<path d="M86.2 112.2L88.2 110.2V116.8L86.2 119Z" fill="#009000"/>
<!-- glass cube -->
<rect x="104.5" y="106.5" width="11" height="11" fill="#eef6ff" stroke="#909090"/>
<path d="M100.5 110.5L104.5 106.5M111.5 110.5L115.5 106.5M111.5 121.5L115.5 117.5" stroke="#909090"/>
<rect x="100.5" y="110.5" width="11" height="11" fill="url(#glass)" fill-opacity="0.9" stroke="#000" stroke-width="1.3"/>
<rect x="104.5" y="110.5" width="7" height="7" fill="#a8e0ff" stroke="#7090a0" stroke-width="0.8"/>
<!-- radial btn -->
<rect x="125.5" y="107.5" width="15" height="14" fill="url(#rb)" stroke="#000080" stroke-dasharray="2 1"/>
<!-- grid icon -->
<rect x="154.5" y="108.5" width="12" height="12" fill="#fff" stroke="#000080" stroke-width="1.4"/>
<path d="M158.5 108.5V120.5M162.5 108.5V120.5M154.5 112.5H166.5M154.5 116.5H166.5" stroke="#000080" stroke-width="1.2"/>
<!-- dotted grid icon -->
<g shape-rendering="crispEdges"><rect x="177" y="107" width="14" height="14" fill="#000080"/><g fill="#fff"><rect x="178" y="108" width="3" height="1"/><rect x="182" y="108" width="4" height="1"/><rect x="178" y="109" width="3" height="1"/><rect x="187" y="109" width="3" height="1"/><rect x="182" y="110" width="4" height="1"/><rect x="187" y="110" width="3" height="1"/><rect x="178" y="111" width="3" height="1"/><rect x="182" y="111" width="4" height="1"/><rect x="178" y="112" width="2" height="1"/><rect x="183" y="112" width="3" height="1"/><rect x="187" y="112" width="3" height="1"/><rect x="178" y="113" width="3" height="1"/><rect x="182" y="113" width="4" height="1"/><rect x="187" y="113" width="2" height="1"/><rect x="182" y="114" width="1" height="1"/><rect x="184" y="114" width="2" height="1"/><rect x="178" y="115" width="3" height="1"/><rect x="182" y="115" width="4" height="1"/><rect x="187" y="115" width="1" height="1"/><rect x="189" y="115" width="1" height="1"/><rect x="178" y="116" width="2" height="1"/><rect x="187" y="116" width="2" height="1"/><rect x="178" y="117" width="3" height="1"/><rect x="182" y="117" width="3" height="1"/><rect x="187" y="117" width="3" height="1"/><rect x="179" y="118" width="2" height="1"/><rect x="182" y="118" width="4" height="1"/><rect x="187" y="118" width="3" height="1"/><rect x="180" y="119" width="1" height="1"/></g></g>
<!-- zoom + -->
<path d="M200.5 120.5L206 115" stroke="#f08020" stroke-width="2.2" stroke-linecap="round"/>
<circle cx="210" cy="111.2" r="4.6" fill="#c8e8ff" stroke="#80b8e8" stroke-width="1"/>
<path d="M208 110L210 108.5" stroke="#fff" stroke-width="1"/>
<path d="M208.5 118.5H214M211.25 116V121.5" stroke="#000" stroke-width="1.3"/>
<!-- zoom - -->
<path d="M224.5 120.5L230 115" stroke="#f08020" stroke-width="2.2" stroke-linecap="round"/>
<circle cx="234.2" cy="111.2" r="4.6" fill="#c8e8ff" stroke="#80b8e8" stroke-width="1"/>
<path d="M232.5 110L234.5 108.5" stroke="#fff" stroke-width="1"/>
<path d="M233 118.5H239" stroke="#000" stroke-width="1.3"/>
<!-- zoom A -->
<path d="M249.5 121L255 115.5" stroke="#f08020" stroke-width="2.2" stroke-linecap="round"/>
<circle cx="258" cy="111.3" r="4" fill="#c8e8ff" stroke="#80b8e8" stroke-width="1"/>
<path d="M256.8 121.5L260.5 112.5L264.2 121.5M258 118.5H263" fill="none" stroke="#000080" stroke-width="1.2"/>
<!-- arrows -->
<path d="M274.5 113.8L279.5 108.8V111.3H284V116.3H279.5V118.8Z" fill="url(#blu)" stroke="#102080" stroke-width="0.9"/>
<path d="M319 113.8L314 108.8V111.3H309.5V116.3H314V118.8Z" fill="url(#blu)" stroke="#102080" stroke-width="0.9"/>
<path d="M296.5 103L302.5 109H299V112.5H294V109H290.5Z" fill="url(#blu)" stroke="#102080" stroke-width="0.9"/>
<path d="M296.5 124.5L302.5 118.5H299V115H294V118.5H290.5Z" fill="url(#blu)" stroke="#102080" stroke-width="0.9"/>

<!-- right toolbar icons -->
<path d="M468.5 106.5H477L480.5 110V121.5H468.5Z" fill="#d8f0ff" stroke="#3a8edc"/>
<path d="M477 106.5V110H480.5" fill="#fff" stroke="#3a8edc"/>
<rect x="471" y="109" width="7" height="10" fill="#ffb8ff"/>
<path d="M471 109V119M477.5 109V119M471 112.5H477.5M471 115.5H477.5" stroke="#202080" stroke-width="1.2"/>
<path d="M491.5 109.5L504.5 122M504.5 109.5L491.5 122" stroke="#9a9a9a" stroke-width="1.7"/>
<rect x="495" y="112" width="6.5" height="6.5" fill="#b0b0b0" stroke="#7a7a7a"/>
<path d="M516.5 119.5L520.5 114.5H531.5L527.5 119.5Z" fill="#3a88e0" stroke="#18306a"/>
<path d="M516.5 115L522 109H532L526.5 115Z" fill="url(#blu)" stroke="#18306a"/>

<!-- LEFT PALETTE -->
<rect x="3.5" y="135.5" width="14" height="10" fill="none" stroke="#000080" stroke-dasharray="2 1"/>
<!-- eyedropper -->
<ellipse cx="28.5" cy="146.5" rx="3.5" ry="1.6" fill="#18a0ff"/>
<ellipse cx="33.5" cy="147" rx="3" ry="1.2" fill="#a8dcff"/>
<path d="M27 146.8L26.8 145L34.2 137.6L36.4 139.8L29 147.2Z" fill="#fff" stroke="#101050" stroke-width="0.8" stroke-linejoin="round"/>
<path d="M34.2 136.8L38 133H41.2V136.5L37.5 140.2Z" fill="#2838ff" stroke="#101050" stroke-width="0.9"/>
<path d="M36 136.5L38.5 134" stroke="#8090ff" stroke-width="0.8"/>
<!-- 3D eraser -->
<path d="M3.5 164.5L8 159.5H15.5V165.5L11 169.5H4L3.5 168.5Z" fill="#20a020" stroke="#18186a" stroke-width="1"/>
<path d="M4 164.5H11V169H4Z" fill="url(#ltb)"/>
<path d="M4.2 164L8.3 160H15L11 164Z" fill="#58e058"/>
<path d="M11.3 164L15 160.3V165.3L11.3 168.8Z" fill="#10a010"/>
<path d="M3.5 164.5L8 159.5H15.5V165.5L11 169.5H4L3.5 168.5ZM11 164.5V169.5M11 164.5L15.5 160M3.5 164.5H11" fill="none" stroke="#18186a" stroke-width="0.9"/>
<path d="M19.5 169.5V174H15Z" fill="#000"/>
<!-- eraser -->
<g transform="rotate(-45 33 164)">
<rect x="23.5" y="159" width="19" height="10" rx="4" fill="#e8e8e8" stroke="#404040" stroke-width="0.9"/>
<rect x="30" y="159.5" width="7" height="9" fill="#1c64d8"/>
<rect x="31" y="160.5" width="5" height="3" fill="#5090f0"/>
</g>
<path d="M43.5 169.5V174H39Z" fill="#000"/>
<!-- pencil -->
<path d="M12.76 180.52L16.24 182.48L10.24 192.48L6.3 195.5L6.76 190.52Z" fill="#1818a0" stroke="#101060" stroke-width="0.9" stroke-linejoin="round"/>
<path d="M11.76 183.1L14.84 184.8L10.1 191.9L7.3 190.3Z" fill="#2a3af0"/>
<path d="M13 181.1L15.7 182.6L14.7 184.2L12 182.6Z" fill="#fff"/>
<path d="M7.1 191L9.6 192.4L6.6 195Z" fill="#f8c000"/>
<!-- brush -->
<rect x="31.5" y="180" width="3.2" height="9" rx="1.6" fill="#3848e0" stroke="#101060" stroke-width="0.8"/>
<path d="M29.5 191.5L30.5 188.5H35.7L36.7 191.5Z" fill="#2838c8" stroke="#101060" stroke-width="0.9"/>
<rect x="29.5" y="191.5" width="7.2" height="4" fill="#fff" stroke="#101060" stroke-width="0.9"/>
<path d="M31.6 192.5V195M33.1 192.5V195M34.6 192.5V195" stroke="#303080" stroke-width="0.7"/>
<path d="M43.5 193.5V197.5H39.5Z" fill="#000"/>
<!-- airbrush -->
<g fill="#6a6ad8"><rect x="2" y="206" width="1" height="1"/><rect x="4" y="206" width="1" height="1"/><rect x="1" y="208" width="1" height="1"/><rect x="3" y="208" width="1" height="1"/><rect x="5" y="208" width="1" height="1"/><rect x="2" y="210" width="1" height="1"/><rect x="4" y="210" width="1" height="1"/><rect x="1" y="212" width="1" height="1"/><rect x="3" y="212" width="1" height="1"/><rect x="5" y="211" width="1" height="1"/><rect x="2" y="214" width="1" height="1"/><rect x="4" y="213" width="1" height="1"/><rect x="3" y="216" width="1" height="1"/><rect x="1" y="215" width="1" height="1"/><rect x="5" y="215" width="1" height="1"/><rect x="2" y="218" width="1" height="1"/><rect x="4" y="218" width="1" height="1"/><rect x="7" y="217" width="1" height="1"/></g>
<g transform="rotate(-45 12.5 209.5)">
<rect x="9.5" y="204" width="6" height="11" rx="1.5" fill="url(#ltb2)" stroke="#101050" stroke-width="0.9"/>
<rect x="10" y="206.5" width="5" height="1.2" fill="#fff"/>
<rect x="10.5" y="202.5" width="4" height="2" fill="#303080"/>
</g>
<path d="M19.5 219V223H15.5Z" fill="#000"/>
<!-- fill bucket -->
<path d="M29.5 206.5C26 208 24.5 212 26 219.5L28 219C27.5 214 28 211 30.5 208.5Z" fill="#0050e0" stroke="#001080" stroke-width="0.6"/>
<g transform="rotate(-45 35 211.5)">
<rect x="31" y="206.5" width="8.5" height="10.5" fill="#2070e0" stroke="#101050" stroke-width="0.9"/>
<rect x="31.5" y="207" width="7.5" height="2.8" fill="#e8f4ff"/>
<rect x="31.5" y="212" width="7.5" height="2.5" fill="#303070"/>
</g>
<!-- line -->
<path d="M3.5 231.5L14.5 243" stroke="url(#lgrad)" stroke-width="1.5"/>
<!-- T -->
<path d="M27.5 232H39.5V235.5H38.5L38 234H34.5V242.5L36 243V244H30V243L31.5 242.5V234H28L27.5 235.5H26.5Z" fill="url(#tgrad)"/>
<!-- curve -->
<path d="M2.5 263C5 258.5 7.5 258.5 9.5 261.5C11.5 264.5 14 264.5 16.5 261" stroke="url(#sgrad)" stroke-width="1.3" fill="none"/>
<!-- arc -->
<path d="M26 256C33 256 38.5 260 38.5 268.5" stroke="url(#sgrad)" stroke-width="1.2" fill="none"/>
<!-- rect outline -->
<rect x="2.5" y="281.5" width="14" height="10" fill="none" stroke="url(#sgrad)" stroke-width="1"/>
<rect x="26" y="281" width="15" height="10" fill="url(#blk)"/>
<!-- ellipse -->
<ellipse cx="9.5" cy="310" rx="7" ry="4.5" fill="none" stroke="url(#sgrad)" stroke-width="1"/>
<ellipse cx="33.5" cy="310" rx="7.5" ry="5" fill="url(#blk)"/>
<!-- round rect -->
<rect x="1.5" y="329.5" width="15" height="9" rx="3" fill="none" stroke="url(#sgrad)" stroke-width="1"/>
<rect x="25" y="329" width="16" height="10" rx="3" fill="url(#blk)"/>
<!-- separator -->
<rect x="0" y="348" width="45" height="1" fill="#8a8a8a"/>
<rect x="0" y="349" width="45" height="1" fill="#fff"/>
<!-- line width -->
<rect x="5" y="356.8" width="35" height="1.4" rx="0.7" fill="#000"/>
<path d="M43 359V363H39Z" fill="#000"/>
<!-- blue square -->
<rect x="3.5" y="373.5" width="13" height="13" fill="#0090ff" stroke="#102060" stroke-width="1.3"/>
<!-- checker -->
<rect x="27" y="373" width="12" height="12" fill="#fff"/>
<g fill="#0090ff" stroke="#003a90" stroke-width="0.8"><rect x="27.4" y="373.4" width="3.4" height="3.4"/><rect x="35.4" y="373.4" width="3.4" height="3.4"/><rect x="31.4" y="377.4" width="3.4" height="3.4"/><rect x="27.4" y="381.4" width="3.4" height="3.4"/><rect x="35.4" y="381.4" width="3.4" height="3.4"/></g>
<path d="M43.5 385V389.5H39Z" fill="#000"/>
<!-- aa line -->
<path d="M4.5 406L15.5 401" stroke="#101010" stroke-width="2.4" stroke-linecap="round" opacity="0.85"/>
<!-- light blue square -->
<rect x="25" y="395" width="15" height="15" fill="#88a8ff"/>
<path d="M25 395L32.5 402.5L40 395Z" fill="url(#pyT)"/>
<path d="M25 410L32.5 402.5L40 410Z" fill="url(#pyB)"/>
<path d="M25 395L32.5 402.5L25 410Z" fill="url(#pyL)"/>
<path d="M40 395L32.5 402.5L40 410Z" fill="url(#pyR)"/>
<path d="M43 409V413H39Z" fill="#000"/>
<!-- overlap 1 -->
<rect x="6.5" y="425.5" width="11.5" height="8" fill="#a8a8c8" stroke="#5a5a90" stroke-width="0.9"/>
<rect x="2.5" y="422.5" width="11" height="8" fill="#3a8a3a" fill-opacity="0.7" stroke="#3a7a3a" stroke-width="0.9"/>
<!-- overlap 2 -->
<rect x="25.2" y="421.5" width="11.5" height="8" fill="#68a868" stroke="#3a7a3a" stroke-width="0.9"/>
<rect x="29.5" y="424.5" width="11" height="8" fill="#a8a8c8" stroke="#5a5a90" stroke-width="0.9"/>
<!-- lock 1 -->
<path d="M1.5 446.5L4.5 443.5H14V453L10 455.5H1.5Z" fill="#b8e0ff" stroke="#18186a" stroke-width="1"/>
<rect x="2" y="447" width="7.5" height="8" fill="url(#glass)"/>
<path d="M1.5 446.5H10.5L14 443.5M10.5 446.5V455.5" fill="none" stroke="#18186a" stroke-width="0.8"/>
<path d="M10.2 450.5V447.8C10.2 445.2 14.6 445.2 14.6 447.8V450.5" fill="none" stroke="#c89a00" stroke-width="1.9"/>
<path d="M7.5 452L9 450.5H15.8L17.3 452V457L15.8 458.6H9L7.5 457Z" fill="url(#gold)" stroke="#b88a00" stroke-width="0.7"/>
<rect x="12" y="453" width="1.2" height="3.3" fill="#201800"/>
<!-- lock 2 -->
<circle cx="28" cy="449" r="1" fill="#ff9040"/><circle cx="29.5" cy="447.5" r="0.7" fill="#ffb060"/><circle cx="26.8" cy="452.8" r="1.3" fill="#ff2020"/><circle cx="27" cy="455.5" r="0.8" fill="#a0a0ff"/><circle cx="32" cy="446" r="0.7" fill="#80d0ff"/><circle cx="25.5" cy="451" r="0.7" fill="#ffe0e0"/>
<path d="M33.7 450.5V447.8C33.7 445.2 38.1 445.2 38.1 447.8V450.5" fill="none" stroke="#c89a00" stroke-width="1.9"/>
<path d="M31.0 452L32.5 450.5H39.3L40.8 452V457L39.3 458.6H32.5L31.0 457Z" fill="url(#gold)" stroke="#b88a00" stroke-width="0.7"/>
<rect x="35.5" y="453" width="1.2" height="3.3" fill="#201800"/>
<!-- header swap arrows -->
<path d="M534 132H538V136M536 134.5L538 137L540 134.5" fill="none" stroke="#202070" stroke-width="1.1"/>
<path d="M530 146H526V142M524 143.5L526 141L528 143.5" fill="none" stroke="#202070" stroke-width="1.1"/>
<!-- crosshair -->
<path d="M501.5 324V327M501.5 329V332M497 328.5H500M503 328.5H506" stroke="#000" stroke-width="1"/>
<!-- markers -->
<path d="M467 370.5L463.5 376L467 381.5" fill="none" stroke="#fff" stroke-width="0.9"/>
<path d="M536 385.5L539.5 390.5L536 395.5" fill="none" stroke="#fff" stroke-width="0.9"/>
<path d="M464 425L460.5 429H467.5Z" fill="#000"/>
<path d="M464 438L460.5 442H467.5Z" fill="#000"/>
<!-- status icons -->
<g fill="#000"><rect x="432" y="521" width="1" height="3"/><rect x="432" y="527" width="1" height="3"/><rect x="428" y="525" width="3" height="1"/><rect x="434" y="525" width="3" height="1"/><rect x="438" y="525" width="1" height="1"/><rect x="440" y="525" width="1" height="1"/><rect x="440" y="527" width="1" height="1"/><rect x="440" y="529" width="1" height="1"/><rect x="440" y="531" width="1" height="1"/><rect x="440" y="533" width="1" height="1"/><rect x="438" y="533" width="1" height="1"/><rect x="436" y="533" width="1" height="1"/><rect x="434" y="533" width="1" height="1"/><rect x="432" y="533" width="1" height="1"/><rect x="432" y="531" width="1" height="1"/><rect x="509" y="521" width="1" height="4"/><rect x="516" y="521" width="1" height="4"/><rect x="504" y="526" width="4" height="1"/><rect x="504" y="533" width="4" height="1"/><rect x="509" y="526" width="1" height="1"/><rect x="511" y="526" width="1" height="1"/><rect x="513" y="526" width="1" height="1"/><rect x="515" y="526" width="1" height="1"/><rect x="516" y="528" width="1" height="1"/><rect x="516" y="530" width="1" height="1"/><rect x="516" y="532" width="1" height="1"/><rect x="514" y="533" width="1" height="1"/><rect x="512" y="533" width="1" height="1"/><rect x="510" y="533" width="1" height="1"/><rect x="509" y="531" width="1" height="1"/><rect x="509" y="529" width="1" height="1"/></g>
<g fill="#1040b0"><rect x="511" y="522" width="3" height="1"/><path d="M513 520.5L515.5 522.5L513 524.5Z"/><rect x="505" y="527.5" width="1" height="3"/><path d="M503.5 530L505.5 532.5L507.5 530Z"/></g>
<path d="M582.5 529.5L588 535" stroke="#f08020" stroke-width="2.4"/>
<circle cx="579" cy="525.5" r="4.6" fill="#b8dcff" stroke="#88b8e8" stroke-width="1"/>
<path d="M576.5 525L579 522.5M578 527.5L581.5 524" stroke="#fff" stroke-width="1"/>
<g fill="#c4c4c4"><rect x="638" y="527" width="2" height="2"/><rect x="634" y="531" width="2" height="2"/><rect x="638" y="531" width="2" height="2"/><rect x="630" y="534" width="2" height="1"/><rect x="634" y="534" width="2" height="1"/><rect x="638" y="534" width="2" height="1"/></g>
</svg>
</body></html>
